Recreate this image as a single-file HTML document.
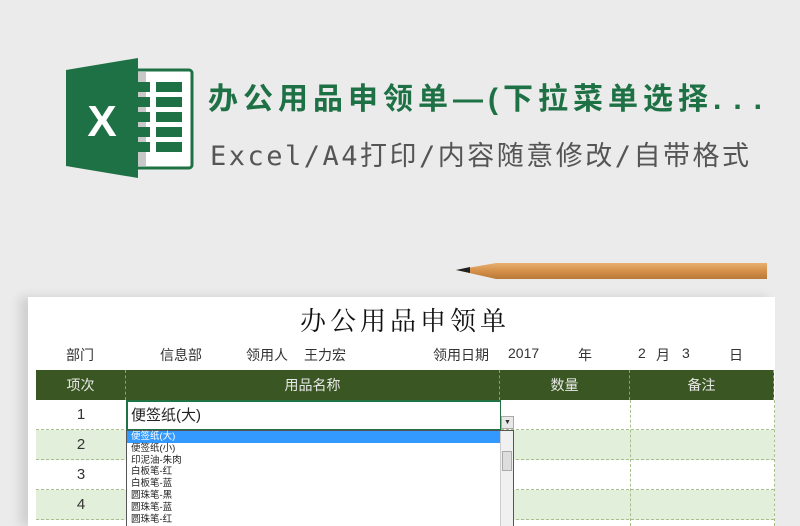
<!DOCTYPE html>
<html><head><meta charset="utf-8"><style>
*{margin:0;padding:0;box-sizing:border-box}
html,body{width:800px;height:526px;overflow:hidden}
body{background:#ebebeb;position:relative;font-family:"Liberation Sans","Noto Sans CJK SC",sans-serif}
.abs{position:absolute}
.t1{left:208px;top:74px;font-size:30px;font-weight:bold;color:#1e7145;letter-spacing:5px;white-space:nowrap}
.t2{left:210px;top:134px;font-size:27px;color:#555;letter-spacing:2.5px;white-space:nowrap;font-family:"DejaVu Sans Mono","Noto Sans CJK SC",monospace}
.sheet{left:28px;top:297px;width:747px;height:229px;background:#fff;box-shadow:-8px 0 10px rgba(0,0,0,.12)}
.cell{position:absolute;text-align:center;font-size:14px;color:#333}
.hdr{position:absolute;top:370px;height:30px;background:#3a5723;color:#e8e8e8;font-size:14px;line-height:30px;text-align:center;border-right:1px dashed #8aa070}
.row{position:absolute;left:36px;width:738px;height:30px;border-bottom:1px dashed #a8c090}
.g{background:#e2efda}
.vl{position:absolute;top:400px;height:126px;border-left:1px dashed #a8c090}
.num{position:absolute;left:36px;width:90px;text-align:center;font-size:15px;color:#333;line-height:30px}
.dd{left:126px;top:430px;width:388px;height:100px;background:#fff;border:1px solid #555;font-size:9.5px;line-height:11.8px;color:#222}
.dd div{padding-left:4px;height:11.8px}
</style></head><body>
<svg class="abs" style="left:66px;top:58px" width="128" height="122" viewBox="0 0 128 122">
<rect x="52" y="12" width="74" height="98" rx="3" fill="#fff" stroke="#1e7145" stroke-width="3"/>
<rect x="72" y="14" width="8" height="94" fill="#c8c8c8"/>
<g fill="#1e7145">
<rect x="72" y="24" width="12" height="10"/><rect x="90" y="24" width="26" height="10"/>
<rect x="72" y="39" width="12" height="10"/><rect x="90" y="39" width="26" height="10"/>
<rect x="72" y="54" width="12" height="10"/><rect x="90" y="54" width="26" height="10"/>
<rect x="72" y="69" width="12" height="10"/><rect x="90" y="69" width="26" height="10"/>
<rect x="72" y="84" width="12" height="10"/><rect x="90" y="84" width="26" height="10"/>
</g>
<polygon points="0,12 72,0 72,120 0,108" fill="#1e7145"/>
<text x="36" y="78" fill="#fff" font-size="44" font-weight="bold" text-anchor="middle" font-family="Liberation Sans">X</text>
</svg>
<div class="abs t1">办公用品申领单—(下拉菜单选择<span style="letter-spacing:12px">...</span></div>
<div class="abs t2">Excel/A4打印/内容随意修改/自带格式</div>
<svg class="abs" style="left:456px;top:260px" width="312" height="22">
<defs><linearGradient id="w" x1="0" y1="0" x2="0" y2="1"><stop offset="0" stop-color="#e8b070"/><stop offset=".5" stop-color="#d4904a"/><stop offset="1" stop-color="#b87838"/></linearGradient></defs>
<polygon points="0,10 40,3 311,3 311,19 40,19" fill="url(#w)"/>
<polygon points="0,10 14,7 14,13" fill="#222"/>
</svg>
<div class="abs sheet"></div>
<div class="abs" style="left:0;width:810px;top:301px;text-align:center;font-size:26px;font-family:'Noto Serif CJK SC',serif;letter-spacing:4px;color:#111">办公用品申领单</div>
<div class="cell" style="left:66px;top:345px">部门</div>
<div class="cell" style="left:160px;top:345px">信息部</div>
<div class="cell" style="left:246px;top:345px">领用人</div>
<div class="cell" style="left:304px;top:345px">王力宏</div>
<div class="cell" style="left:433px;top:345px">领用日期</div>
<div class="cell" style="left:508px;top:345px">2017</div>
<div class="cell" style="left:578px;top:345px">年</div>
<div class="cell" style="left:638px;top:345px">2</div>
<div class="cell" style="left:656px;top:345px">月</div>
<div class="cell" style="left:682px;top:345px">3</div>
<div class="cell" style="left:729px;top:345px">日</div>
<div class="hdr" style="left:36px;width:90px">项次</div>
<div class="hdr" style="left:126px;width:374px">用品名称</div>
<div class="hdr" style="left:500px;width:130px">数量</div>
<div class="hdr" style="left:630px;width:144px">备注</div>
<div class="row" style="top:400px"></div>
<div class="row g" style="top:430px"></div>
<div class="row" style="top:460px"></div>
<div class="row g" style="top:490px"></div>
<div class="row" style="top:520px"></div>
<div class="vl" style="left:126px"></div><div class="vl" style="left:500px"></div><div class="vl" style="left:630px"></div><div class="vl" style="left:774px"></div>
<div class="num" style="top:400px">1</div><div class="num" style="top:430px">2</div><div class="num" style="top:460px">3</div><div class="num" style="top:490px">4</div>
<div class="abs" style="left:126px;top:400px;width:375px;height:31px;border:2px solid #217346;border-right-width:1px;font-size:15px;line-height:28px;padding-left:3px;color:#222">便签纸(大)</div>
<div class="abs" style="left:501px;top:416px;width:13px;height:13px;background:#e8e8e8;border:1px solid #aaa;font-size:7px;text-align:center;line-height:12px;color:#333">▼</div>
<div class="abs dd">
<div style="background:#3399ff;color:#fff">便签纸(大)</div><div>便签纸(小)</div><div>印泥油-朱肉</div><div>白板笔-红</div><div>白板笔-蓝</div><div>圆珠笔-黑</div><div>圆珠笔-蓝</div><div>圆珠笔-红</div>
<div class="abs" style="right:0;top:0;width:13px;height:100px;background:#f0f0f0;border-left:1px solid #ccc"><div class="abs" style="left:1px;top:20px;width:10px;height:20px;background:#ddd;border:1px solid #aaa;padding:0"></div></div>
</div>
</body></html>
